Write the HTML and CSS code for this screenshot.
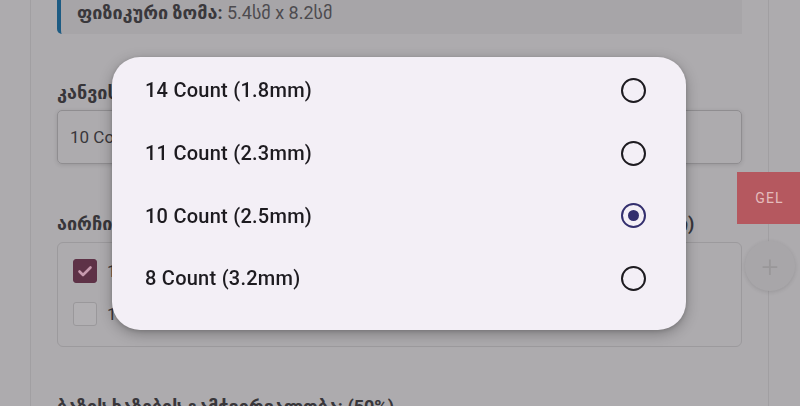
FILE: index.html
```html
<!DOCTYPE html>
<html lang="ka">
<head>
<meta charset="utf-8">
<title>Canvas</title>
<link rel="stylesheet" href="styles.css">
</head>
<body>
<div class="page">
  <main class="card">
    <div class="info"><b>ფიზიკური ზომა:</b> 5.4სმ x 8.2სმ</div>

    <section class="field">
      <div class="label">კანვის ზომა</div>
      <div class="select">10 Count (2.5mm)</div>
    </section>

    <section class="field field-colors">
      <div class="label">აირჩიეთ ძაფის ფერები (მაქსიმუმ 2 ფერი, ამჟამად არჩეულია 1 ფერი)</div>
      <div class="colors">
        <div class="color-row"><span class="check checked"><svg viewBox="0 0 24 24" width="24" height="24"><path d="M6.5 12.5l3.5 3.5 7.5-7.5" fill="none" stroke="#c79aae" stroke-width="2.6" stroke-linecap="round" stroke-linejoin="round"/></svg></span><span class="color-name">1 ფერი</span></div>
        <div class="color-row"><span class="check"></span><span class="color-name">10 ფერი</span></div>
      </div>
    </section>

    <section class="field field-last">
      <div class="label">ბაზის ხაზების გამჭვირვალობა: (50%)</div>
    </section>
  </main>
</div>

<div class="currency">GEL</div>
<div class="fab"><span>+</span></div>

<div class="dialog" role="dialog">
  <div class="option"><span>14 Count (1.8mm)</span><span class="radio"></span></div>
  <div class="option"><span>11 Count (2.3mm)</span><span class="radio"></span></div>
  <div class="option"><span>10 Count (2.5mm)</span><span class="radio selected"></span></div>
  <div class="option"><span>8 Count (3.2mm)</span><span class="radio"></span></div>
</div>
</body>
</html>
```

FILE: styles.css
```css
* { box-sizing: border-box; }
html, body {
  margin: 0;
  height: 406px;
  overflow: hidden;
  background: #adabae;
  font-family: Roboto, "DejaVu Sans", sans-serif;
}
.page {
  padding-left: 30px;
  height: 406px;
  overflow: hidden;
}
.card {
  width: 739px;
  height: 406px;
  overflow: hidden;
  padding: 0 26px 0 26px;
  background: #adabae;
  border-left: 1px solid #a19fa2;
  border-right: 1px solid #a19fa2;
}
.info {
  margin-top: -12px;
  padding: 14px 16px 10px 16px;
  line-height: 22px;
  font-size: 18px;
  color: #4d4b4f;
  background: #a7a5a8;
  border-left: 4px solid #1d5b83;
  border-radius: 0 0 0 5px;
  white-space: nowrap;
}
.info b {
  color: #3a383c;
  font-weight: 700;
}
.field { margin-top: 49px; }
.field-colors { margin-top: 50px; }
.field-last { margin-top: 50px; }
.label {
  font-size: 18px;
  line-height: 20px;
  font-weight: 700;
  color: #38363a;
  white-space: nowrap;
  margin-bottom: 7px;
}
.field-colors .label { margin-bottom: 8px; }
.select {
  height: 54px;
  border: 1px solid #8f8d90;
  border-radius: 5px;
  padding-left: 12px;
  display: flex;
  align-items: center;
  font-size: 17px;
  color: #39373b;
  box-shadow: 0 1px 4px rgba(0,0,0,0.12);
}
.colors {
  height: 105px;
  border: 1px solid #9c9a9d;
  border-radius: 6px;
  padding: 16px 15px 0 15px;
  display: flex;
  flex-direction: column;
  gap: 19px;
}
.color-row {
  display: flex;
  align-items: center;
  gap: 10px;
  height: 24px;
  font-size: 17px;
  color: #39373b;
}
.check {
  width: 24px;
  height: 24px;
  border: 1px solid #9a989b;
  border-radius: 3px;
  background: #b1afb2;
  display: block;
}
.check.checked {
  background: #5e3247;
  border-color: #5e3247;
}
.check svg { display: block; margin: -1px; }

.currency {
  position: fixed;
  left: 737px;
  top: 172px;
  width: 63px;
  height: 52px;
  background: #b5585f;
  color: #e4bcbd;
  font-size: 14px;
  letter-spacing: 1.2px;
  display: flex;
  align-items: center;
  justify-content: center;
  padding-left: 2px;
}
.fab {
  position: fixed;
  left: 745px;
  top: 241px;
  width: 50px;
  height: 50px;
  border-radius: 50%;
  background: #a8a6a9;
  box-shadow: 0 1px 4px rgba(0,0,0,0.12);
  display: flex;
  align-items: center;
  justify-content: center;
  color: #999799;
  font-size: 30px;
  font-weight: 300;
}

.dialog {
  position: fixed;
  left: 112px;
  top: 57px;
  width: 574px;
  height: 273px;
  border-radius: 28px;
  background: #f3eff6;
  box-shadow: 0 4px 14px rgba(0,0,0,0.28), 0 1px 4px rgba(0,0,0,0.15);
  padding: 2px 40px 0 33px;
}
.option {
  height: 62.7px;
  display: flex;
  align-items: center;
  justify-content: space-between;
  font-size: 20px;
  font-weight: 500;
  color: #1d1b20;
  letter-spacing: 0.25px;
}
.radio {
  width: 25px;
  height: 25px;
  border-radius: 50%;
  border: 2px solid #1d1b20;
  display: block;
  position: relative;
}
.radio.selected {
  border-color: #332f6e;
}
.radio.selected::after {
  content: "";
  position: absolute;
  left: 50%;
  top: 50%;
  width: 11px;
  height: 11px;
  margin: -5.5px 0 0 -5.5px;
  border-radius: 50%;
  background: #332f6e;
}
```
